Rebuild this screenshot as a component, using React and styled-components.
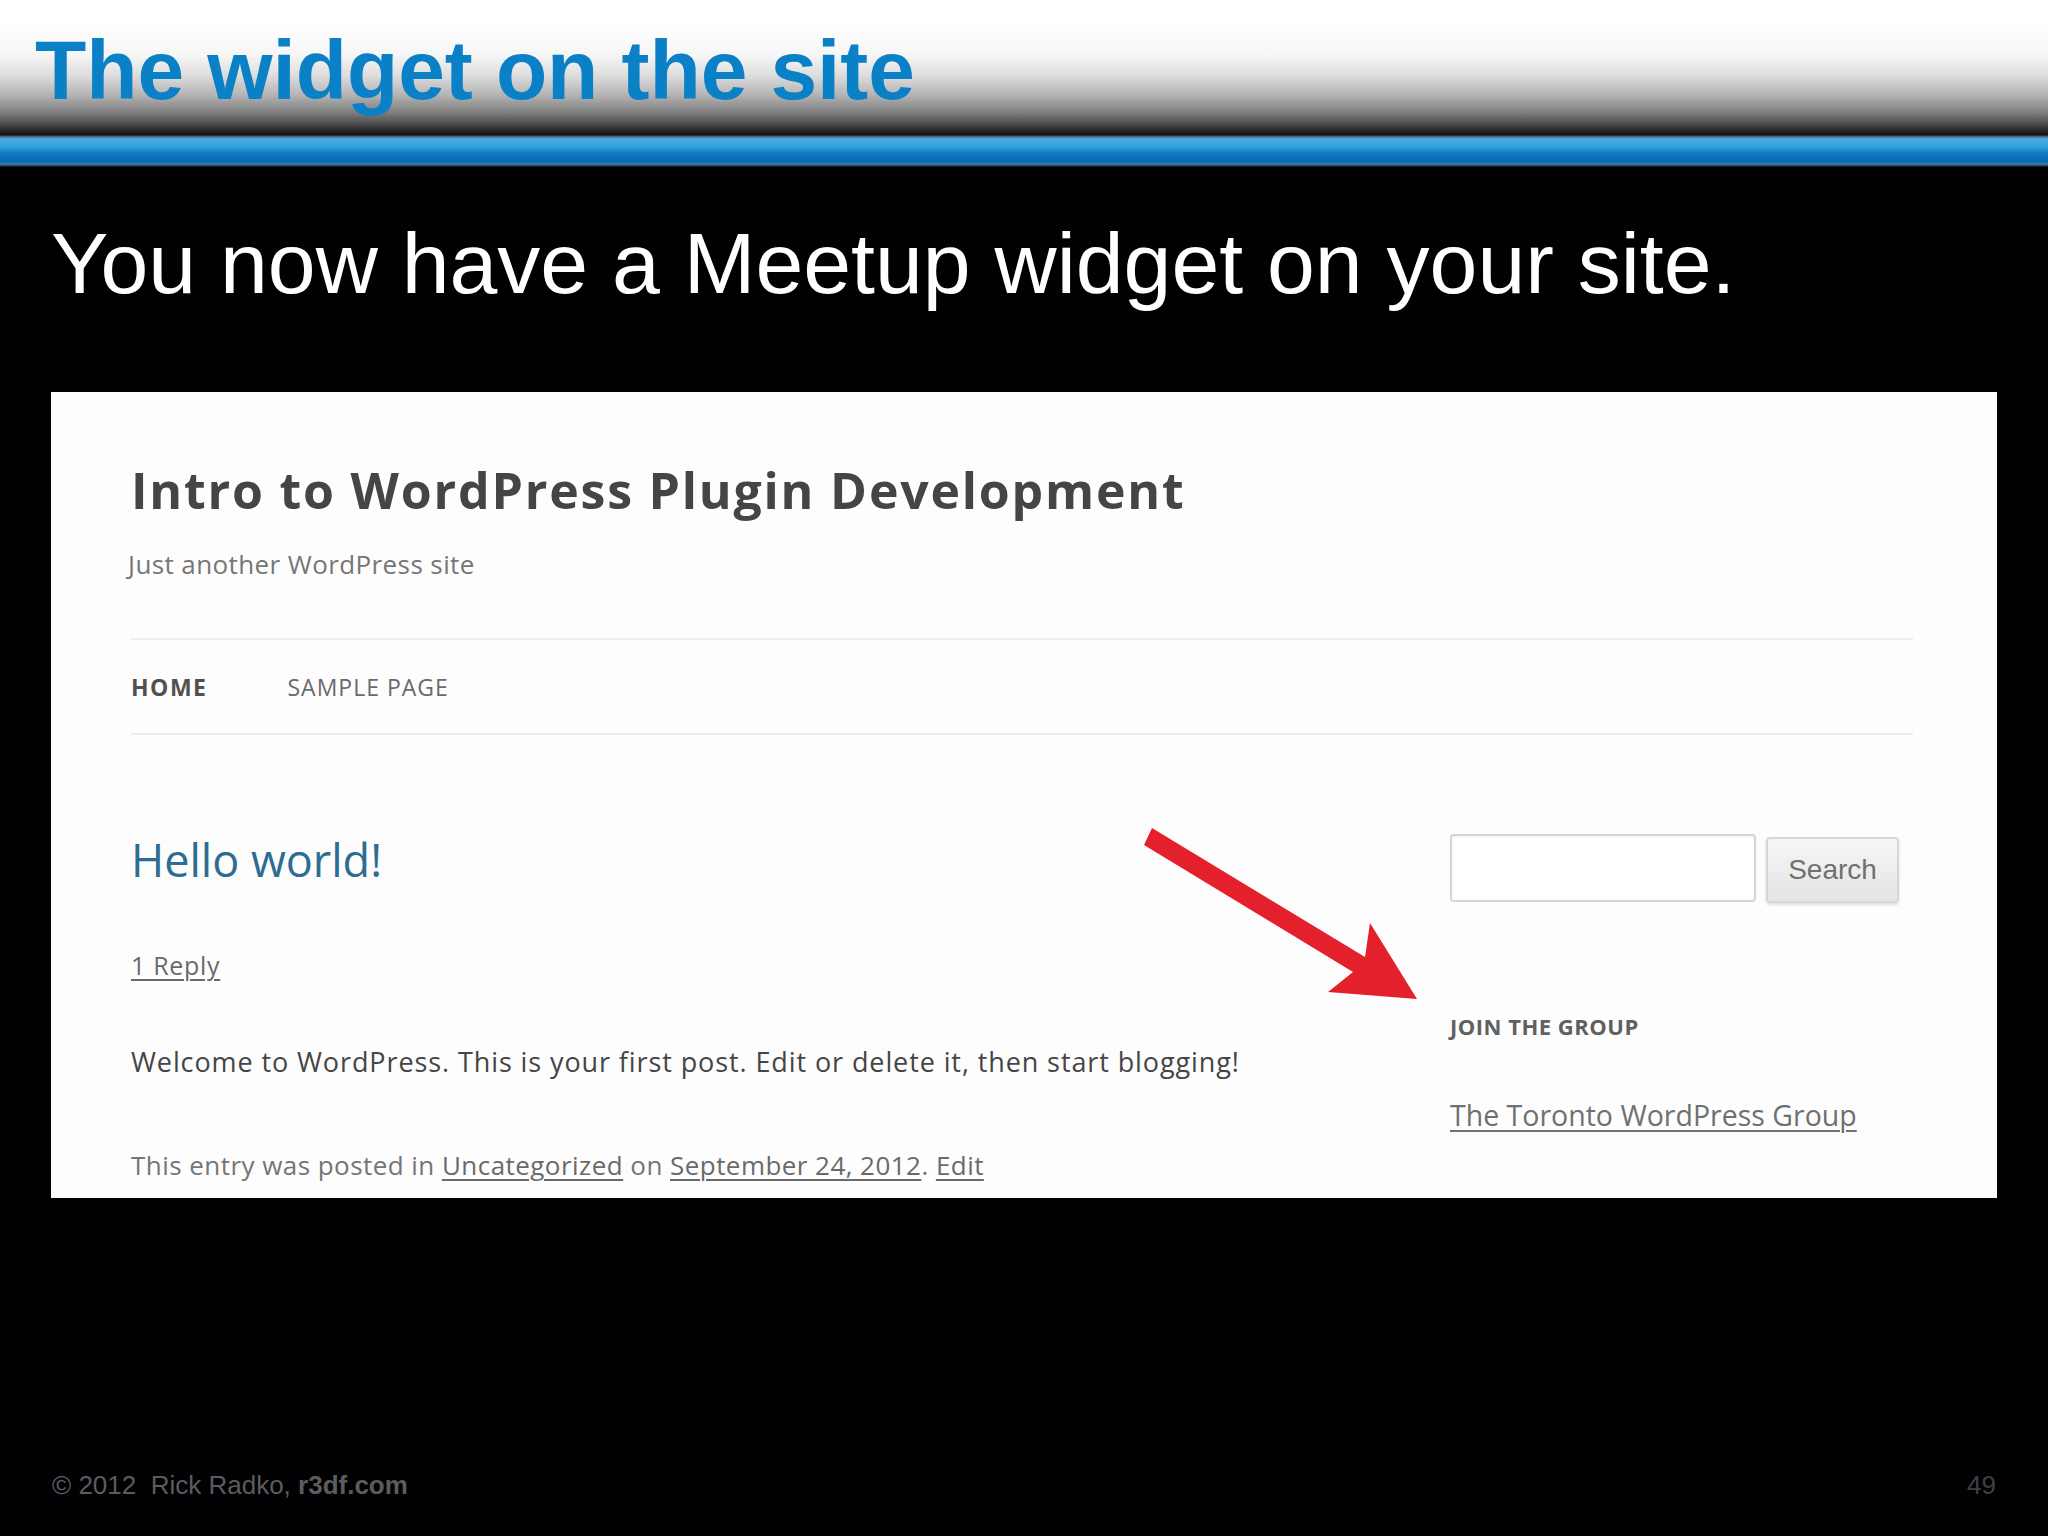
import React from 'react';
import styled, { createGlobalStyle } from 'styled-components';

const GlobalStyle = createGlobalStyle`
  html, body {
    margin: 0;
    padding: 0;
    background: #000;
  }
  * {
    box-sizing: border-box;
  }
`;

const Slide = styled.div`
  width: 2048px;
  height: 1536px;
  background: #010103;
  display: flex;
  flex-direction: column;
  overflow: hidden;
  font-family: 'Liberation Sans', Arial, sans-serif;
`;

const TitleBar = styled.header`
  height: 135px;
  padding: 28px 0 0 35px;
  background: linear-gradient(
    to bottom,
    #ffffff 0px,
    #ffffff 25px,
    #f6f6f6 55px,
    #dedede 75px,
    #b4b4b4 95px,
    #808080 112px,
    #4c4c4c 124px,
    #1e1e1e 132px,
    #121212 135px
  );
`;

const SlideTitle = styled.h1`
  margin: 0;
  font-family: 'Liberation Sans', Arial, sans-serif;
  font-weight: 700;
  font-size: 84px;
  line-height: 84px;
  letter-spacing: -0.1px;
  color: #0a80c6;
`;

const BlueRule = styled.div`
  height: 32px;
  background: linear-gradient(
    to bottom,
    #1a1a1a 0px,
    #5a7896 2px,
    #47ace2 4px,
    #31a3e0 12px,
    #0f7ac2 18px,
    #0568b2 27px,
    #4a7ea6 29px,
    #2a3a4a 31px,
    #000 32px
  );
`;

const Body = styled.main`
  flex: 1;
  padding: 46px 51px 0 51px;
  display: flex;
  flex-direction: column;
`;

const Lead = styled.p`
  margin: 0 0 79px 0;
  font-family: 'Liberation Sans', Arial, sans-serif;
  font-size: 86px;
  line-height: 100px;
  color: #ffffff;
`;

/* --- embedded site screenshot --- */

const Shot = styled.section`
  position: relative;
  height: 806px;
  background: #fdfdfd;
  overflow: hidden;
  padding: 70px 84px 0 80px;
  font-family: 'Open Sans', 'Noto Sans', sans-serif;
`;

const SiteName = styled.h2`
  margin: 0;
  font-weight: 700;
  font-size: 50px;
  line-height: 56px;
  letter-spacing: 1.8px;
  color: #454545;
`;

const Tagline = styled.p`
  margin: 30px 0 0 -3px;
  font-size: 26px;
  line-height: 32px;
  letter-spacing: 0.4px;
  color: #767676;
`;

const Nav = styled.nav`
  margin-top: 58px;
  height: 97px;
  border-top: 2px solid #ededed;
  border-bottom: 2px solid #ededed;
  display: flex;
  align-items: center;
  gap: 80px;
`;

const NavItem = styled.span`
  font-size: 23px;
  text-transform: uppercase;
  letter-spacing: ${(p) => (p.$current ? 1.5 : 1)}px;
  font-weight: ${(p) => (p.$current ? 700 : 400)};
  color: ${(p) => (p.$current ? '#505050' : '#6a6a6a')};
`;

const Columns = styled.div`
  display: flex;
  justify-content: space-between;
  padding-top: 97px;
`;

const Entry = styled.article`
  display: flex;
  flex-direction: column;
  align-items: flex-start;
`;

const EntryTitle = styled.h3`
  margin: 0;
  font-weight: 400;
  font-size: 45px;
  line-height: 56px;
  color: #2d6d92;
`;

const SmallText = styled.p`
  margin: ${(p) => p.$top}px 0 0 0;
  font-size: ${(p) => p.$size || 25}px;
  line-height: 32px;
  letter-spacing: ${(p) => p.$track || 0}px;
  color: ${(p) => p.$color || '#757575'};
`;

const TextLink = styled.a`
  color: #6a6a6a;
  text-decoration: underline;
  text-decoration-thickness: 2px;
  text-underline-offset: 4px;
`;

const Sidebar = styled.aside`
  width: 449px;
  margin-top: 2px;
  margin-right: 14px;
  display: flex;
  flex-direction: column;
  align-items: flex-start;
`;

const SearchForm = styled.form`
  display: flex;
  align-items: flex-start;
  gap: 10px;
`;

const SearchInput = styled.input`
  width: 306px;
  height: 68px;
  border: 2px solid #d4d4d4;
  border-radius: 4px;
  background: #fff;
  box-shadow: inset 0 1px 2px rgba(0, 0, 0, 0.05);
`;

const SearchButton = styled.button`
  margin-top: 3px;
  width: 133px;
  height: 66px;
  border: 2px solid #d6d6d6;
  border-radius: 4px;
  background: linear-gradient(to bottom, #f6f6f6, #e4e4e4);
  box-shadow: 0 2px 3px rgba(0, 0, 0, 0.12);
  font-family: 'Liberation Sans', Arial, sans-serif;
  font-size: 28px;
  color: #707070;
  padding: 0;
`;

const WidgetTitle = styled.h4`
  margin: 109px 0 0 0;
  font-weight: 700;
  font-size: 22px;
  line-height: 28px;
  letter-spacing: 0.5px;
  color: #606060;
  text-transform: uppercase;
`;

const WidgetLink = styled(TextLink)`
  margin-top: 57px;
  font-size: 28.5px;
  line-height: 36px;
  color: #707070;
`;

const Arrow = styled.svg`
  position: absolute;
  left: 1080px;
  top: 420px;
  width: 300px;
  height: 200px;
`;

/* --- footer --- */

const Footer = styled.footer`
  height: 102px;
  padding: 0 52px 0 52px;
  display: flex;
  align-items: center;
  justify-content: space-between;
  font-family: 'Liberation Sans', Arial, sans-serif;
  font-size: 26px;
  color: #5c5c5c;
`;

const Credit = styled.span`
  white-space: pre;
  b {
    font-weight: 700;
  }
`;

const PageNo = styled.span`
  color: #404040;
`;

export default function App() {
  return (
    <>
      <GlobalStyle />
      <Slide>
        <TitleBar>
          <SlideTitle>The widget on the site</SlideTitle>
        </TitleBar>
        <BlueRule />
        <Body>
          <Lead>You now have a Meetup widget on your site.</Lead>
          <Shot>
            <SiteName>Intro to WordPress Plugin Development</SiteName>
            <Tagline>Just another WordPress site</Tagline>
            <Nav>
              <NavItem $current>Home</NavItem>
              <NavItem>Sample Page</NavItem>
            </Nav>
            <Columns>
              <Entry>
                <EntryTitle>Hello world!</EntryTitle>
                <SmallText $top={61} $track={0.7}>
                  <TextLink>1 Reply</TextLink>
                </SmallText>
                <SmallText $top={65} $size={27} $track={0.9} $color="#454545">
                  Welcome to WordPress. This is your first post. Edit or delete it, then start blogging!
                </SmallText>
                <SmallText $top={71} $size={26} $track={0.45}>
                  This entry was posted in <TextLink>Uncategorized</TextLink> on{' '}
                  <TextLink>September 24, 2012</TextLink>. <TextLink>Edit</TextLink>
                </SmallText>
              </Entry>
              <Sidebar>
                <SearchForm onSubmit={(e) => e.preventDefault()}>
                  <SearchInput type="text" />
                  <SearchButton type="submit">Search</SearchButton>
                </SearchForm>
                <WidgetTitle>Join the Group</WidgetTitle>
                <WidgetLink>The Toronto WordPress Group</WidgetLink>
              </Sidebar>
            </Columns>
            <Arrow viewBox="0 0 300 200">
              <polygon
                points="21,16 234,145 239,111 286,187 197,180 222,160 13,33"
                fill="#e3202b"
              />
            </Arrow>
          </Shot>
        </Body>
        <Footer>
          <Credit>
            © 2012  Rick Radko, <b>r3df.com</b>
          </Credit>
          <PageNo>49</PageNo>
        </Footer>
      </Slide>
    </>
  );
}
